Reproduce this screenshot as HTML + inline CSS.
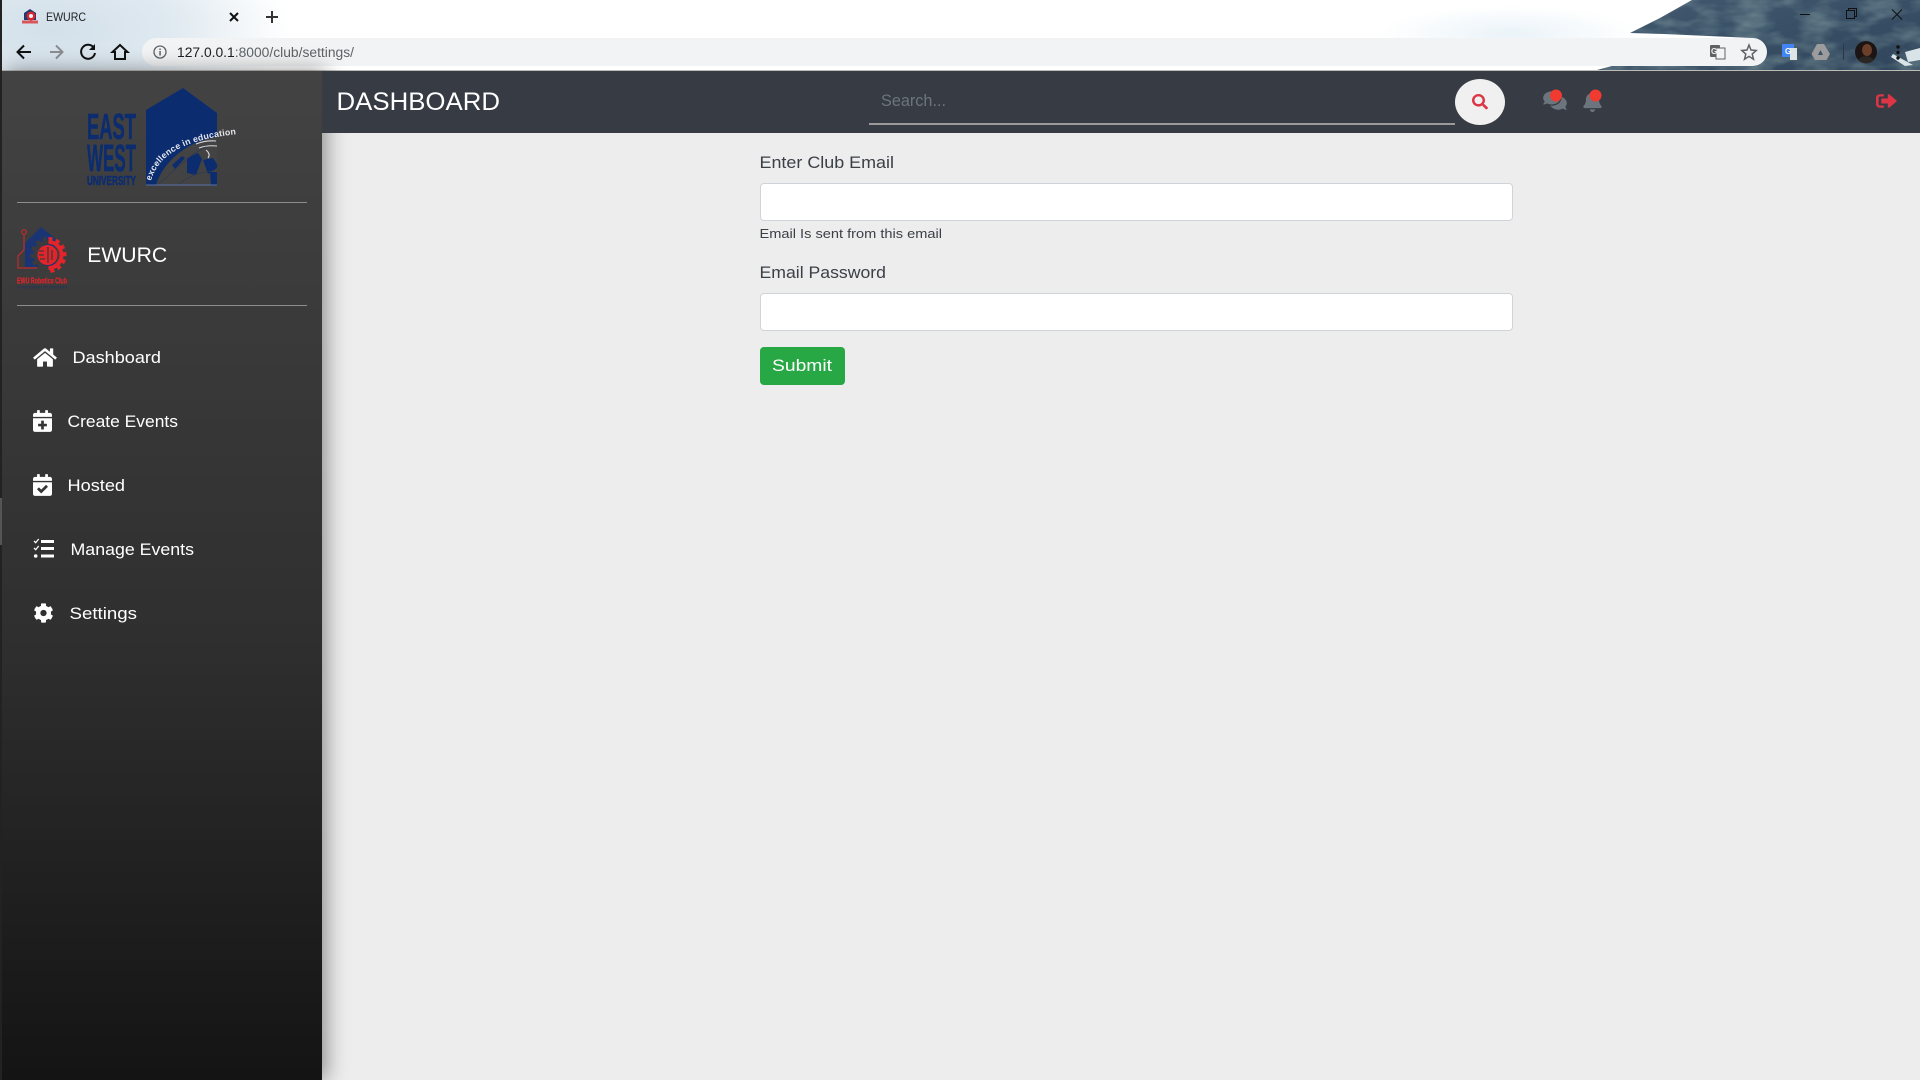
<!DOCTYPE html>
<html lang="en"><head><meta charset="utf-8"><title>EWURC</title>
<style>
html,body{margin:0;padding:0;width:1920px;height:1080px;overflow:hidden;background:#ededed;font-family:"Liberation Sans",sans-serif}
.a{position:absolute}
svg.a{left:0;top:0;overflow:visible;pointer-events:none}
#chrome{left:0;top:0;width:1920px;height:70px;background:radial-gradient(ellipse 240px 110px at 50px 30px,#d3e0ea 0,#dfe9f0 50%,rgba(255,255,255,0) 100%),radial-gradient(ellipse 130px 28px at 1510px 34px,#eaf3f9 0,rgba(255,255,255,0) 100%),#fff}
#url{left:142px;top:38px;width:1625px;height:28px;border-radius:14px;background:#f1f3f4}
#line{left:0;top:70px;width:1920px;height:1px;background:#bdbbb6}
#strip{left:0;top:0;width:2px;height:1080px;background:#222}
#thumb{left:0;top:498px;width:2px;height:47px;background:#555}
#side{left:2px;top:71px;width:320px;height:1009px;background:linear-gradient(#434343 0,#2f2f2f 56%,#141414 100%);box-shadow:4px 0 20px rgba(0,0,0,.42)}
#top{left:322px;top:71px;width:1598px;height:62px;background:#373b43}
.hr{left:17px;width:290px;height:1px;background:#8d8d8d}
#sb{left:869px;top:123px;width:586px;height:2px;background:#9a9a9a}
#sbtn{left:1455px;top:79px;width:50px;height:46px;border-radius:50%;background:#f0f0f0}
input{position:absolute;left:760px;width:753px;height:38px;box-sizing:border-box;border:1px solid #ced4da;border-radius:4px;background:#fff;padding:0;margin:0}
button{position:absolute;left:760px;top:347px;width:85px;height:38px;border:0;border-radius:4px;background:#28a745;padding:0;margin:0}
</style></head><body>

<div class="a" id="chrome"></div>
<div class="a" id="url"></div>
<svg class="a" width="1920" height="70" viewBox="0 0 1920 70">
<defs>
<linearGradient id="mt" x1="0" y1="0" x2="1" y2="1"><stop offset="0" stop-color="#42596f"/><stop offset=".5" stop-color="#384f66"/><stop offset="1" stop-color="#30455b"/></linearGradient>
<filter id="nz" x="0" y="0" width="100%" height="100%"><feTurbulence type="fractalNoise" baseFrequency=".03 .07" numOctaves="3" seed="4"/><feColorMatrix values="0 0 0 0 .26  0 0 0 0 .38  0 0 0 0 .38  0 0 0 1.100 -.42"/><feComposite in2="SourceGraphic" operator="in"/></filter>
</defs>
<path d="M1692 0L1660 18L1630 33L1664 34L1753 38A14 14 0 0 1 1753 66H1612L1597 70H1920V0Z" fill="url(#mt)"/>
<path d="M1692 0L1660 18L1630 33L1664 34L1753 38A14 14 0 0 1 1753 66H1612L1597 70H1920V0Z" fill="#000" filter="url(#nz)"/>
<path d="M1893 54l20 11-8 1-14-9zM1905 52l15-4v12l-12 2z" fill="#d9e4e8"/>
<!-- favicon -->
<path d="M24 13l6-4 6 4v7H24z" fill="#20396f"/><circle cx="31" cy="16" r="4.500" fill="#d9262c"/><circle cx="31" cy="16" r="2" fill="#eef"/><rect x="22" y="20.500" width="16" height="3" fill="#d9262c" opacity=".75"/>
<text x="46" y="21" font-size="12" fill="#222" textLength="40" lengthAdjust="spacingAndGlyphs">EWURC</text>
<path d="M230 13l8 8m0-8l-8 8" stroke="#111" stroke-width="2" fill="none"/>
<path d="M272 11v12m-6-6h12" stroke="#333" stroke-width="2" fill="none"/>
<!-- nav -->
<path d="M31 52H18m6-6.500L17.500 52l6.500 6.500" stroke="#111" stroke-width="2" fill="none"/>
<path d="M50 52h12m-6-6.500 6.500 6.500-6.500 6.500" stroke="#8b8d90" stroke-width="2" fill="none"/>
<path d="M94 48a7 7 0 1 0 1 5" stroke="#111" stroke-width="2" fill="none"/><path d="M95 44v6h-6z" fill="#111"/>
<path d="M120 45l-7.500 7h2.500v7h10v-7h2.500z" stroke="#111" stroke-width="2" fill="none"/>
<circle cx="160" cy="52" r="6" stroke="#5f6368" stroke-width="1.300" fill="none"/><rect x="159.300" y="51" width="1.500" height="4.500" fill="#5f6368"/><rect x="159.300" y="48.500" width="1.500" height="1.500" fill="#5f6368"/>
<text x="177" y="57" font-size="13.500" fill="#5f6368" textLength="177" lengthAdjust="spacingAndGlyphs"><tspan fill="#202124">127.0.0.1</tspan>:8000/club/settings/</text>
<!-- right toolbar -->
<rect x="1710" y="45" width="10" height="12" rx="1" fill="#616161"/><rect x="1716" y="48" width="9" height="11" fill="#f1f3f4" stroke="#616161"/><text x="1711" y="54" font-size="8" font-weight="bold" fill="#eee">G</text>
<path d="M1749 45l2 5 5.200.500-4 3.500 1.300 5.200-4.500-2.800-4.500 2.800 1.300-5.200-4-3.500 5.200-.500z" stroke="#5f6368" stroke-width="1.500" fill="none"/>
<rect x="1782" y="44" width="12" height="13" rx="1" fill="#4285f4"/><rect x="1790" y="48" width="7" height="12" fill="#dfe3e6"/><text x="1785" y="54" font-size="8" font-weight="bold" fill="#fff">G</text>
<path d="M1817 44h7l6 10-3.500 6h-11.500l-3.500-6zM1820.500 50l-2.500 5h5z" fill="#9c9c9c" fill-rule="evenodd"/>
<rect x="1843" y="44" width="1" height="16" fill="#2a3a4c"/>
<circle cx="1866" cy="52" r="11" fill="#1c1412"/><ellipse cx="1867" cy="50" rx="5" ry="6" fill="#6b3f2a"/><path d="M1858 60c3-5 13-5 16 0a11 11 0 0 1-16 0z" fill="#2a2624"/>
<circle cx="1898" cy="47" r="1.700" fill="#111"/><circle cx="1898" cy="52.500" r="1.700" fill="#111"/><circle cx="1898" cy="58" r="1.700" fill="#111"/>
<!-- window controls -->
<rect x="1800" y="14" width="10" height="1" fill="#111"/>
<path d="M1846.500 18.500h8v-8h-8zM1848.500 10.500v-2h8v8h-2" stroke="#111" fill="none"/>
<path d="M1892 9.500l10 10m0-10l-10 10" stroke="#111" fill="none"/>
</svg>
<div class="a" id="line"></div>

<div class="a" id="side"></div>
<div class="a" id="strip"></div><div class="a" id="thumb"></div>
<div class="a" id="top"></div>
<div class="a hr" style="top:202px"></div>
<div class="a hr" style="top:305px"></div>

<!-- sidebar logos, text, icons -->
<svg class="a" width="1920" height="1080" viewBox="0 0 1920 1080">
<g fill="#0c2c70" font-weight="bold" stroke="#0c2c70" stroke-width=".5">
<text x="87" y="139" font-size="36" textLength="49" lengthAdjust="spacingAndGlyphs">EAST</text>
<text x="87" y="171" font-size="38" textLength="49" lengthAdjust="spacingAndGlyphs">WEST</text>
<text x="87" y="185" font-size="13" textLength="49" lengthAdjust="spacingAndGlyphs">UNIVERSITY</text>
</g>
<path d="M146 110L183 88L217 113V185H146Z" fill="#0c2c70"/>
<path d="M156 185C163 162 187 141 217 137V185Z" fill="#434343"/>
<path d="M187 158l11-5 4 6-6 16-9-2zM203 160l10-2 4 6v4l-9 6zM210 172h7v13h-6zM172 165l10-9 3 2-10 11z" fill="#0c2c70"/>
<path d="M196 144q10-4 20-3M199 148q8-3 18-2M206 150q5 4 2 8" stroke="#d5d8de" stroke-width="1.100" fill="none"/>
<path d="M158 184c8-4 30-30 48-37M178 185q14-12 34-14" stroke="#2c3a55" stroke-width=".7" fill="none"/>
<path d="M146 185h71" stroke="#5a70a8" stroke-width="1"/>
<path id="arc" d="M151 181C158 157 180 138 250 133" fill="none"/>
<text font-size="8.800" font-weight="bold" fill="#e4e6ea" letter-spacing=".2"><textPath href="#arc">excellence in education</textPath></text>

<path d="M25 243L41 227L55 238V267H25Z" fill="#1b3474"/>
<path d="M24 235v15l-6 6v12h27" stroke="#d9262c" stroke-width="1" fill="none"/><circle cx="24" cy="232" r="2.300" fill="none" stroke="#d9262c"/>
<path d="M48.500 242A13 13 0 0 1 48.500 268" stroke="#e3242b" stroke-width="4" fill="none"/>
<path d="M48.500 268A13 13 0 0 1 48.500 242" stroke="#3b3b3b" stroke-width="4" fill="none"/>
<path d="M48.500 239A16 16 0 0 1 48.500 271" stroke="#e3242b" stroke-width="4" fill="none" stroke-dasharray="4 3.400"/>
<path d="M48.500 271A16 16 0 0 1 48.500 239" stroke="#3b3b3b" stroke-width="4" fill="none" stroke-dasharray="4 3.400"/>
<circle cx="47.500" cy="255" r="10" fill="#e3242b"/>
<path d="M39 251h5m-5 4h5m-4 4h5m3-12v16m4-13v10" stroke="#3b3b3b" stroke-width="1.300" fill="none"/>
<text x="17" y="283.500" font-size="8.500" font-weight="bold" fill="#d9262c" stroke="#d9262c" stroke-width=".3" textLength="50" lengthAdjust="spacingAndGlyphs">EWU Robotics Club</text>
<text x="17" y="288.500" font-size="4.500" fill="#22325c" textLength="50" lengthAdjust="spacingAndGlyphs">Innovation of dreams</text>

<g fill="#fff">
<text x="87.200" y="262" font-size="21.500" textLength="80" lengthAdjust="spacingAndGlyphs">EWURC</text>
<g font-size="16.500">
<text x="72.500" y="363" textLength="88.500" lengthAdjust="spacingAndGlyphs">Dashboard</text>
<text x="67.500" y="427" textLength="110.500" lengthAdjust="spacingAndGlyphs">Create Events</text>
<text x="67.500" y="491" textLength="57.500" lengthAdjust="spacingAndGlyphs">Hosted</text>
<text x="70.500" y="555" textLength="123.500" lengthAdjust="spacingAndGlyphs">Manage Events</text>
<text x="69.500" y="619" textLength="67.500" lengthAdjust="spacingAndGlyphs">Settings</text>
</g>
<svg x="33" y="347" width="24" height="21" viewBox="0 0 576 512"><path d="M280.370 148.260L96 300.110V464a16 16 0 0 0 16 16l112.060-.29a16 16 0 0 0 15.920-16V368a16 16 0 0 1 16-16h64a16 16 0 0 1 16 16v95.640a16 16 0 0 0 16 16.050L464 480a16 16 0 0 0 16-16V300L295.670 148.260a12.190 12.190 0 0 0-15.300 0zM571.600 251.470L488 182.560V44.050a12 12 0 0 0-12-12h-56a12 12 0 0 0-12 12v72.610L318.470 43a48 48 0 0 0-61 0L4.340 251.470a12 12 0 0 0-1.600 16.900l25.500 31A12 12 0 0 0 45.150 301l235.220-193.740a12.190 12.190 0 0 1 15.300 0L530.900 301a12 12 0 0 0 16.900-1.600l25.500-31a12 12 0 0 0-1.700-16.930z"/></svg>
<svg x="33" y="410" width="19" height="22" viewBox="0 0 448 512"><path d="M436 160H12c-6.600 0-12-5.400-12-12v-36c0-26.500 21.500-48 48-48h48V12c0-6.600 5.400-12 12-12h40c6.600 0 12 5.400 12 12v52h128V12c0-6.600 5.400-12 12-12h40c6.600 0 12 5.400 12 12v52h48c26.500 0 48 21.500 48 48v36c0 6.600-5.400 12-12 12zM12 192h424c6.600 0 12 5.400 12 12v260c0 26.500-21.500 48-48 48H48c-26.500 0-48-21.500-48-48V204c0-6.600 5.400-12 12-12zm316 140c0-6.600-5.400-12-12-12h-60v-60c0-6.600-5.400-12-12-12h-40c-6.600 0-12 5.400-12 12v60h-60c-6.600 0-12 5.400-12 12v40c0 6.600 5.400 12 12 12h60v60c0 6.600 5.400 12 12 12h40c6.600 0 12-5.400 12-12v-60h60c6.600 0 12-5.400 12-12v-40z"/></svg>
<svg x="33" y="474" width="19" height="22" viewBox="0 0 448 512"><path d="M436 160H12c-6.600 0-12-5.400-12-12v-36c0-26.500 21.500-48 48-48h48V12c0-6.600 5.400-12 12-12h40c6.600 0 12 5.400 12 12v52h128V12c0-6.600 5.400-12 12-12h40c6.600 0 12 5.400 12 12v52h48c26.500 0 48 21.500 48 48v36c0 6.600-5.400 12-12 12zM12 192h424c6.600 0 12 5.400 12 12v260c0 26.500-21.500 48-48 48H48c-26.500 0-48-21.500-48-48V204c0-6.600 5.400-12 12-12zm333.300 95.900l-28.200-28.400c-4.700-4.700-12.300-4.700-17-.1L194 365.500l-46.300-46.700c-4.700-4.700-12.300-4.700-17-.1l-28.400 28.200c-4.700 4.700-4.700 12.300-.1 17l83 83.700c4.700 4.700 12.300 4.700 17 .1l143-141.900c4.700-4.700 4.700-12.300.1-17z"/></svg>
<path d="M41 540h13v3H41zM41 547h13v3H41zM41 554.500h13v3H41z"/>
<path d="M34 541l1.700 1.700 3-3.700M34 548l1.700 1.700 3-3.700" stroke="#fff" stroke-width="1.300" fill="none"/><circle cx="35.700" cy="556" r="1.800"/>
<svg x="33.500" y="603" width="20" height="20" viewBox="0 0 512 512"><path d="M487.400 315.700l-42.600-24.600c4.300-23.200 4.300-47 0-70.200l42.600-24.600c4.900-2.800 7.100-8.600 5.500-14-11.100-35.600-30-67.800-54.700-94.600-3.800-4.100-10-5.100-14.800-2.300L380.800 110c-17.900-15.400-38.500-27.300-60.800-35.100V25.800c0-5.600-3.900-10.500-9.400-11.700-36.700-8.200-74.300-7.800-109.200 0-5.500 1.200-9.400 6.100-9.400 11.700V75c-22.200 7.900-42.800 19.800-60.800 35.100L88.700 85.500c-4.900-2.800-11-1.900-14.800 2.300-24.700 26.700-43.600 58.900-54.700 94.600-1.700 5.400.6 11.200 5.500 14L67.300 221c-4.300 23.200-4.300 47 0 70.200l-42.600 24.600c-4.900 2.800-7.100 8.600-5.500 14 11.100 35.600 30 67.800 54.700 94.600 3.800 4.100 10 5.100 14.800 2.300l42.600-24.600c17.900 15.400 38.500 27.300 60.800 35.100v49.200c0 5.600 3.900 10.500 9.400 11.700 36.700 8.200 74.300 7.800 109.200 0 5.500-1.200 9.400-6.100 9.400-11.700v-49.200c22.200-7.900 42.800-19.800 60.800-35.100l42.600 24.600c4.900 2.800 11 1.900 14.800-2.300 24.700-26.700 43.600-58.900 54.700-94.600 1.500-5.500-.7-11.300-5.600-14.100zM256 336c-44.100 0-80-35.900-80-80s35.900-80 80-80 80 35.900 80 80-35.900 80-80 80z"/></svg>
</g>
</svg>

<!-- topbar -->
<div class="a" id="sb"></div>
<div class="a" id="sbtn"></div>
<svg class="a" width="1920" height="1080" viewBox="0 0 1920 1080">
<text x="336.500" y="110" font-size="25" fill="#fff" textLength="163.500" lengthAdjust="spacingAndGlyphs">DASHBOARD</text>
<text x="881" y="106" font-size="16.500" fill="#6c757d" textLength="65" lengthAdjust="spacingAndGlyphs">Search...</text>
<svg x="1472" y="94" width="16" height="15.500" viewBox="0 0 512 512" preserveAspectRatio="none"><path fill="#dc3545" d="M505 442.700L405.300 343c-4.500-4.500-10.600-7-17-7H372c27.600-35.300 44-79.700 44-128C416 93.100 322.900 0 208 0S0 93.100 0 208s93.100 208 208 208c48.300 0 92.700-16.400 128-44v16.300c0 6.400 2.500 12.500 7 17l99.700 99.700c9.400 9.400 24.600 9.400 33.900 0l28.300-28.300c9.400-9.400 9.400-24.600.1-34zM208 336c-70.700 0-128-57.200-128-128 0-70.700 57.200-128 128-128 70.700 0 128 57.200 128 128 0 70.700-57.200 128-128 128z"/></svg>
<svg x="1543" y="90" width="24" height="21" viewBox="0 0 576 512"><path fill="#6c757d" d="M416 192c0-88.400-93.100-160-208-160S0 103.600 0 192c0 34.300 14.100 65.900 38 92-13.400 30.200-35.500 54.200-35.800 54.500-2.200 2.300-2.800 5.700-1.500 8.700S4.800 352 8 352c36.600 0 66.900-12.300 88.700-25 32.200 15.700 70.300 25 111.300 25 114.900 0 208-71.600 208-160zm122 220c23.900-26 38-57.700 38-92 0-66.900-53.500-124.200-129.300-148.100.9 6.600 1.300 13.300 1.300 20.100 0 105.900-107.700 192-240 192-10.800 0-21.300-.8-31.700-1.900C207.800 439.600 281.800 480 368 480c41 0 79.100-9.200 111.300-25 21.800 12.700 52.100 25 88.700 25 3.200 0 6.100-1.900 7.300-4.800 1.300-2.900.7-6.300-1.500-8.700-.3-.3-22.400-24.200-35.800-54.500z"/></svg>
<svg x="1583" y="91" width="19" height="21" viewBox="0 0 448 512"><path fill="#6c757d" d="M224 512c35.320 0 63.970-28.650 63.970-64H160.030c0 35.350 28.650 64 63.970 64zm215.390-149.710c-19.320-20.760-55.470-51.990-55.470-154.290 0-77.700-54.480-139.900-127.940-155.160V32c0-17.670-14.320-32-31.980-32s-31.980 14.330-31.980 32v20.840C118.560 68.100 64.080 130.300 64.080 208c0 102.300-36.150 133.530-55.470 154.290-6 6.450-8.660 14.160-8.610 21.710.11 16.400 12.980 32 32.100 32h383.800c19.120 0 32-15.600 32.100-32 .05-7.550-2.610-15.270-8.610-21.710z"/></svg>
<circle cx="1556" cy="95.500" r="6" fill="#f13a30"/>
<circle cx="1595.500" cy="95.500" r="6" fill="#f13a30"/>
<svg x="1876" y="92" width="21" height="18" viewBox="0 0 512 512" preserveAspectRatio="none"><path fill="#dc3545" d="M497 273L329 441c-15 15-41 4.500-41-17v-96H152c-13.300 0-24-10.700-24-24v-96c0-13.300 10.700-24 24-24h136V88c0-21.400 25.900-32 41-17l168 168c9.300 9.400 9.300 24.600 0 34zM192 436v-40c0-6.600-5.400-12-12-12H96c-17.700 0-32-14.300-32-32V160c0-17.700 14.300-32 32-32h84c6.600 0 12-5.400 12-12V76c0-6.600-5.400-12-12-12H96c-53 0-96 43-96 96v192c0 53 43 96 96 96h84c6.600 0 12-5.400 12-12z"/></svg>
</svg>

<!-- form -->
<input type="email" style="top:183px" aria-label="Enter Club Email">
<input type="password" style="top:293px" aria-label="Email Password">
<button type="submit" aria-label="Submit"></button>
<svg class="a" width="1920" height="1080" viewBox="0 0 1920 1080">
<g fill="#3b4047">
<text x="759.500" y="168" font-size="16.500" textLength="134.500" lengthAdjust="spacingAndGlyphs">Enter Club Email</text>
<text x="759.500" y="238" font-size="13" textLength="182.500" lengthAdjust="spacingAndGlyphs">Email Is sent from this email</text>
<text x="759.500" y="278" font-size="16.500" textLength="126.500" lengthAdjust="spacingAndGlyphs">Email Password</text>
</g>
<text x="772" y="371" font-size="17" fill="#fff" textLength="60" lengthAdjust="spacingAndGlyphs">Submit</text>
</svg>
</body></html>
